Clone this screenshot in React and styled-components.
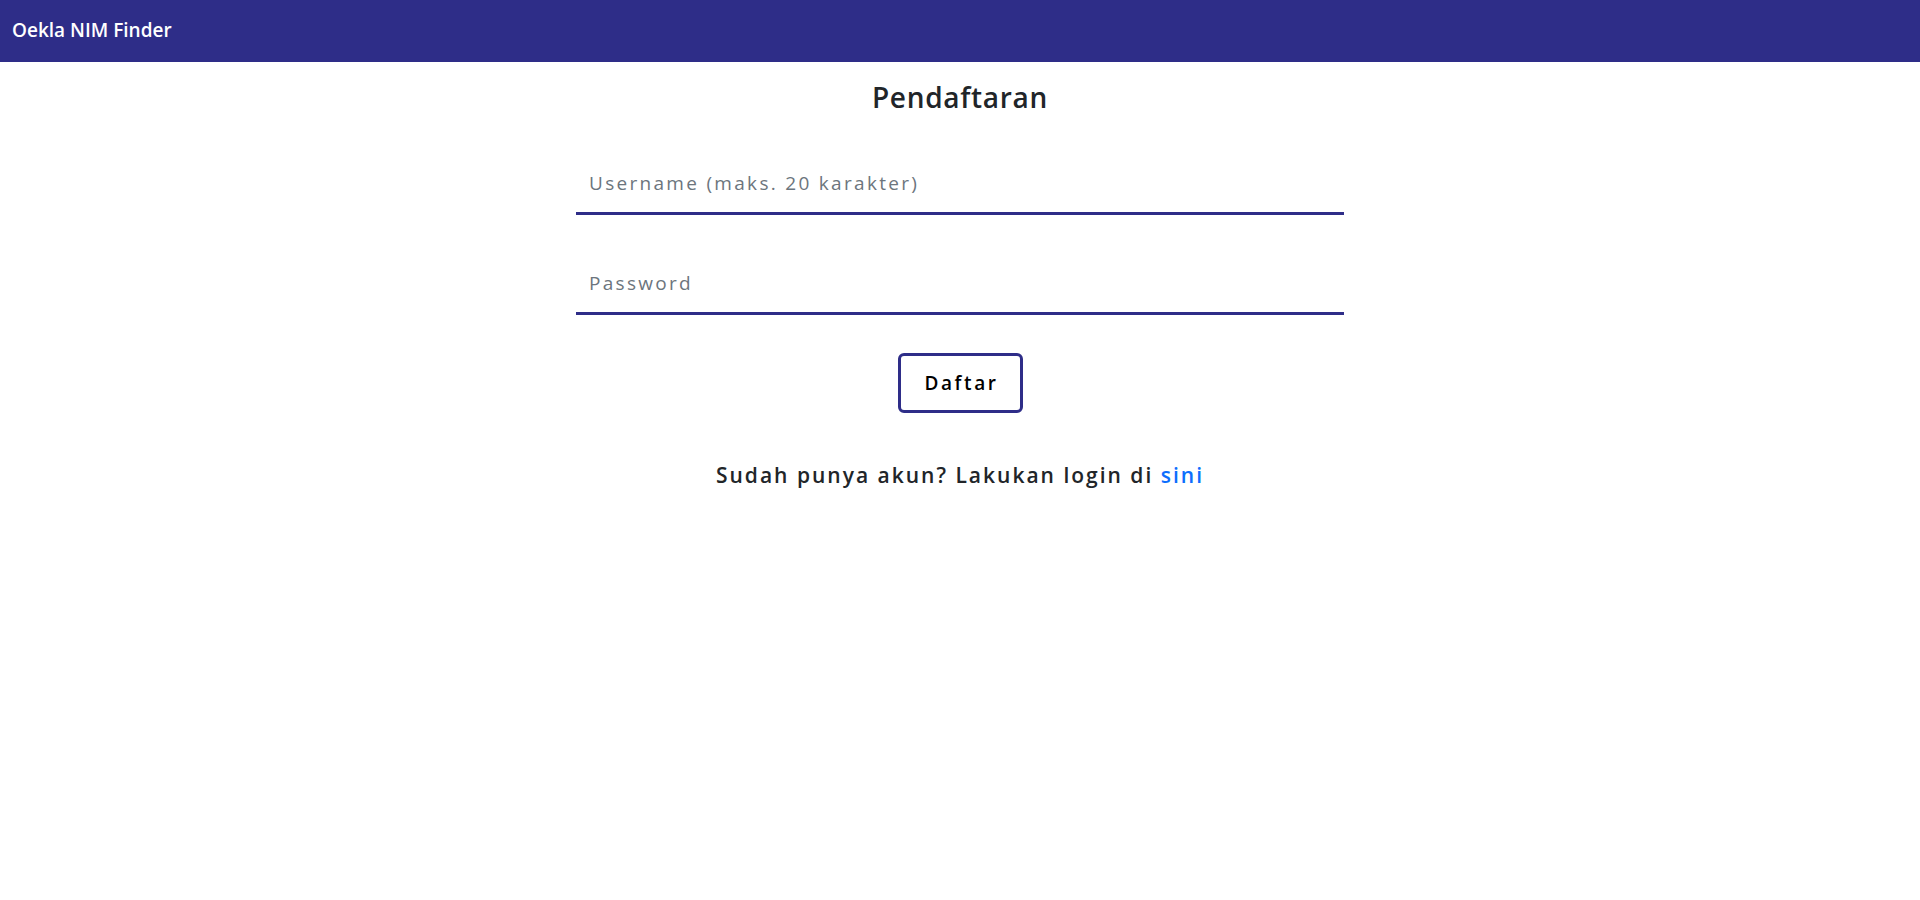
import React from "react";
import styled, { createGlobalStyle } from "styled-components";

const GlobalStyle = createGlobalStyle`
  html, body {
    margin: 0;
    padding: 0;
    background: #fff;
  }
  body {
    font-family: "Open Sans", "Noto Sans", sans-serif;
    color: #212529;
  }
  * {
    box-sizing: border-box;
  }
`;

const Navbar = styled.nav`
  height: 62px;
  background: #2e2d88;
  display: flex;
  align-items: center;
  padding: 0 12px 3px;
`;

const Brand = styled.a`
  color: #fff;
  font-size: 19px;
  font-weight: 600;
  text-decoration: none;
  letter-spacing: 0;
`;

const Main = styled.main`
  width: 768px;
  margin: 0 auto;
  padding-top: 19px;
  display: flex;
  flex-direction: column;
  align-items: stretch;
`;

const Title = styled.h3`
  margin: 0;
  font-size: 28px;
  line-height: 1.2;
  font-weight: 600;
  text-align: center;
  letter-spacing: 0.7px;
`;

const Form = styled.form`
  display: flex;
  flex-direction: column;
  gap: 44px;
  margin-top: 44px;
`;

const Input = styled.input`
  width: 100%;
  height: 56px;
  border: none;
  border-bottom: 3px solid #2e2d88;
  outline: none;
  padding: 0 13px 4px;
  font-family: "Open Sans", "Noto Sans", sans-serif;
  font-size: 19px;
  letter-spacing: 2.3px;
  color: #212529;
  background: transparent;

  &::placeholder {
    color: #6c757d;
  }
`;

const ButtonRow = styled.div`
  display: flex;
  justify-content: center;
  margin-top: -6px;
`;

const SubmitButton = styled.button`
  width: 125px;
  height: 60px;
  border: 3px solid #2e2d88;
  border-radius: 6px;
  background: #fff;
  color: #000;
  font-family: "Open Sans", "Noto Sans", sans-serif;
  font-size: 19px;
  font-weight: 600;
  letter-spacing: 2.6px;
  padding: 0 0 0 3px;
  cursor: pointer;
`;

const Footnote = styled.p`
  margin: 47px 0 0;
  text-align: center;
  font-size: 21px;
  line-height: 1.5;
  font-weight: 600;
  letter-spacing: 2px;
`;

const LoginLink = styled.a`
  color: #0d6efd;
  text-decoration: none;
`;

export default function App() {
  return (
    <>
      <GlobalStyle />
      <Navbar>
        <Brand href="#">Oekla NIM Finder</Brand>
      </Navbar>
      <Main>
        <Title>Pendaftaran</Title>
        <Form onSubmit={(e) => e.preventDefault()}>
          <Input type="text" placeholder="Username (maks. 20 karakter)" />
          <Input type="password" placeholder="Password" />
          <ButtonRow>
            <SubmitButton type="submit">Daftar</SubmitButton>
          </ButtonRow>
        </Form>
        <Footnote>
          Sudah punya akun? Lakukan login di <LoginLink href="#">sini</LoginLink>
        </Footnote>
      </Main>
    </>
  );
}
